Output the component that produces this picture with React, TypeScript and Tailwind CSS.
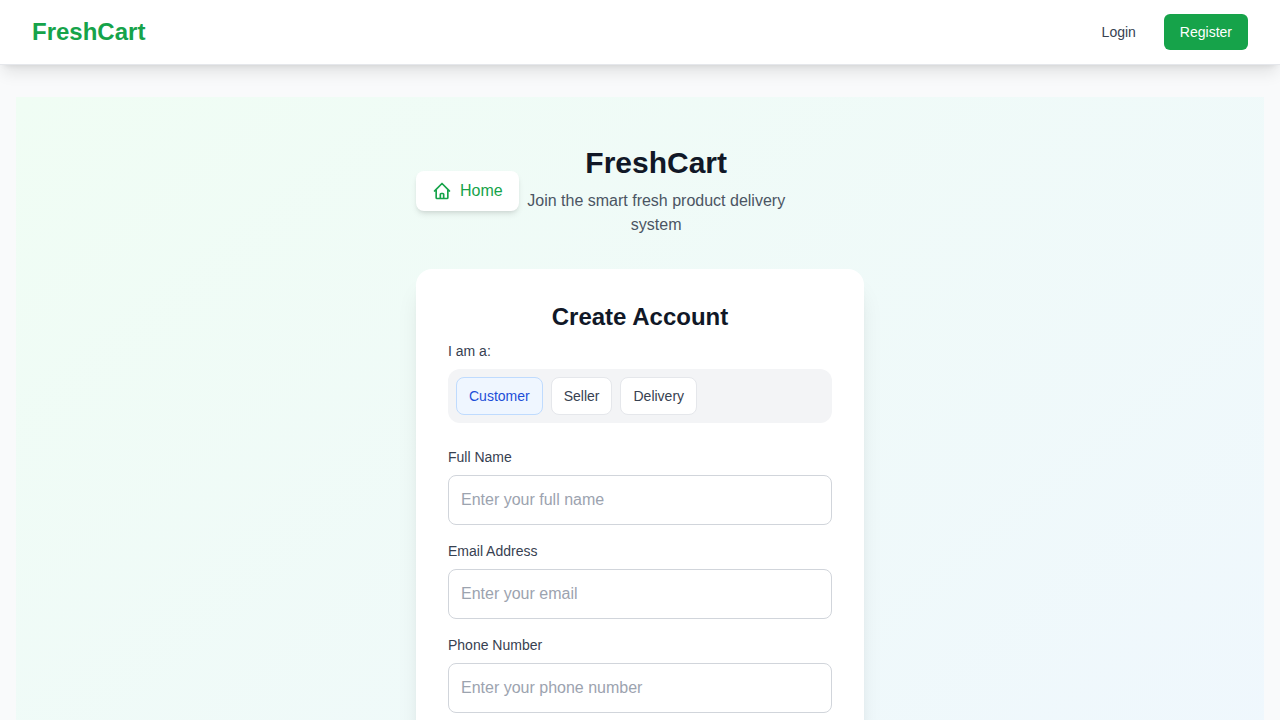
import { useState } from "react";

const roles = ["Customer", "Seller", "Delivery"];

const fields = [
  { id: "name", label: "Full Name", type: "text", placeholder: "Enter your full name" },
  { id: "email", label: "Email Address", type: "email", placeholder: "Enter your email" },
  { id: "phone", label: "Phone Number", type: "tel", placeholder: "Enter your phone number" },
];

function HomeIcon() {
  return (
    <svg className="h-5 w-5" fill="none" stroke="currentColor" viewBox="0 0 24 24" aria-hidden="true">
      <path
        strokeLinecap="round"
        strokeLinejoin="round"
        strokeWidth={2}
        d="M3 12l2-2m0 0l7-7 7 7M5 10v10a1 1 0 001 1h3m10-11l2 2m-2-2v10a1 1 0 01-1 1h-3m-6 0a1 1 0 001-1v-4a1 1 0 011-1h2a1 1 0 011 1v4a1 1 0 001 1m-6 0h6"
      />
    </svg>
  );
}

function NavBar() {
  return (
    <nav className="sticky top-0 z-10 border-b border-[#e5e7eb] bg-white shadow-lg">
      <div className="flex h-16 items-center justify-between px-8">
        <a href="#" className="text-2xl font-bold text-[#16a34a]">
          FreshCart
        </a>
        <div className="flex items-center gap-4 text-sm">
          <a href="#login" className="rounded-md px-3 py-2 text-[#374151]">
            Login
          </a>
          <a href="#register" className="rounded-md bg-[#16a34a] px-4 py-2 text-white">
            Register
          </a>
        </div>
      </div>
    </nav>
  );
}

function RoleSelector() {
  const [role, setRole] = useState(roles[0]);
  return (
    <fieldset>
      <legend className="mb-2 text-sm text-[#374151]">I am a:</legend>
      <div className="flex gap-2 rounded-xl bg-[#f3f4f6] p-2">
        {roles.map((name) => (
          <button
            key={name}
            type="button"
            aria-pressed={role === name}
            onClick={() => setRole(name)}
            className={
              role === name
                ? "rounded-lg border border-[#bfdbfe] bg-[#eff6ff] px-3 py-2 text-sm text-[#1d4ed8]"
                : "rounded-lg border border-[#e5e7eb] bg-white px-3 py-2 text-sm text-[#374151]"
            }
          >
            {name}
          </button>
        ))}
      </div>
    </fieldset>
  );
}

export default function App() {
  return (
    <div className="min-h-screen bg-[#f9fafb] font-['Liberation_Sans',Arial,sans-serif]">
      <NavBar />
      <main className="px-4 py-8">
        <div className="min-h-[1000px] bg-linear-to-br/srgb from-[#f0fdf4] to-[#eff6ff] px-4 py-12">
          <div className="mx-auto max-w-md">
            <header className="mb-8 flex items-center justify-between">
              <a
                href="#home"
                className="flex items-center gap-2 rounded-lg bg-white px-4 py-2 text-[#16a34a] shadow-md"
              >
                <HomeIcon />
                <span>Home</span>
              </a>
              <div className="text-center">
                <h1 className="mb-2 text-3xl font-bold text-[#111827]">FreshCart</h1>
                <p className="text-[#4b5563]">Join the smart fresh product delivery system</p>
              </div>
              <div className="w-20" />
            </header>

            <section className="rounded-2xl bg-white p-8 pb-64 shadow-xl">
              <h2 className="mb-2 text-center text-2xl font-bold text-[#111827]">Create Account</h2>
              <form>
                <RoleSelector />
                <div className="mt-6 flex flex-col gap-4">
                  {fields.map((field) => (
                    <div key={field.id}>
                      <label htmlFor={field.id} className="mb-2 block text-sm text-[#374151]">
                        {field.label}
                      </label>
                      <input
                        id={field.id}
                        type={field.type}
                        placeholder={field.placeholder}
                        className="block w-full rounded-lg border border-[#d1d5db] bg-white px-3 py-3 text-base text-[#111827] placeholder:text-[#9ca3af]"
                      />
                    </div>
                  ))}
                </div>
              </form>
            </section>
          </div>
        </div>
      </main>
    </div>
  );
}
